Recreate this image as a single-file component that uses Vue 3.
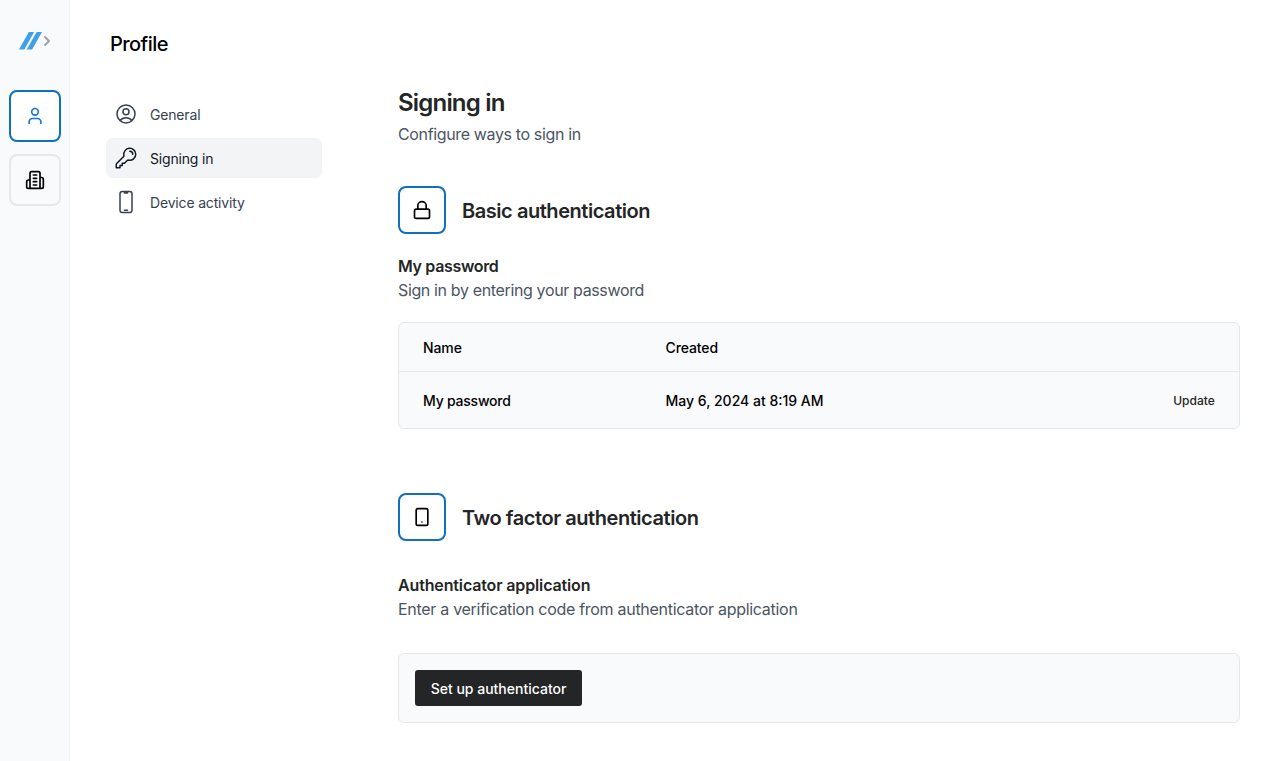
<script setup>
const menu = [
  { label: 'General', icon: 'M17.982 18.725A7.488 7.488 0 0012 15.75a7.488 7.488 0 00-5.982 2.975m11.963 0a9 9 0 10-11.963 0m11.963 0A8.966 8.966 0 0112 21a8.966 8.966 0 01-5.982-2.275M15 9.75a3 3 0 11-6 0 3 3 0 016 0z' },
  { label: 'Signing in', active: true, icon: 'M15.75 5.25a3 3 0 013 3m3 0a6 6 0 01-7.029 5.912c-.563-.097-1.159.026-1.563.43L10.5 17.25H8.25v2.25H6v2.25H2.25v-2.818c0-.597.237-1.17.659-1.591l6.499-6.499c.404-.404.527-1 .43-1.563A6 6 0 1121.75 8.25z' },
  { label: 'Device activity', icon: 'M10.5 1.5H8.25A2.25 2.25 0 006 3.75v16.5a2.25 2.25 0 002.25 2.25h7.5A2.25 2.25 0 0018 20.25V3.75a2.25 2.25 0 00-2.25-2.25H13.5m-3 0V3h3V1.5m-3 0h3m-3 18.75h3' },
]
</script>

<template>
  <div class="app">
    <aside class="rail">
      <div class="brand">
        <svg class="logo" width="24" height="18" viewBox="0 0 24 18">
          <path d="M9.8 0H15.1L5.4 17.6H0Z" />
          <path d="M17.6 0H23L13.1 17.6H7.7Z" />
        </svg>
        <svg class="chevron" width="8" height="16" viewBox="6 0 12 24"><path d="m9 18 6-6-6-6" /></svg>
      </div>
      <button class="tile selected" aria-label="Profile">
        <svg class="line" width="20" height="20" viewBox="0 0 24 24">
          <circle cx="12" cy="7" r="4" /><path d="M5 21v-2a4 4 0 0 1 4-4h6a4 4 0 0 1 4 4v2" />
        </svg>
      </button>
      <button class="tile" aria-label="Organization">
        <svg class="line" width="20" height="20" viewBox="0 0 24 24">
          <path d="M6 22V4a2 2 0 0 1 2-2h8a2 2 0 0 1 2 2v18ZM6 12H4a2 2 0 0 0-2 2v6a2 2 0 0 0 2 2h2M18 9h2a2 2 0 0 1 2 2v9a2 2 0 0 1-2 2h-2M10 6h4M10 10h4M10 14h4M10 18h4" />
        </svg>
      </button>
    </aside>

    <nav class="sidebar">
      <h1>Profile</h1>
      <a v-for="m in menu" :key="m.label" class="item" :class="{ active: m.active }">
        <svg class="thin" width="24" height="24" viewBox="0 0 24 24"><path :d="m.icon" /></svg>
        <span>{{ m.label }}</span>
      </a>
    </nav>

    <main class="content">
      <h2>Signing in</h2>
      <p class="muted lead">Configure ways to sign in</p>

      <section class="basic">
        <header class="head">
          <span class="badge">
            <svg class="line" width="20" height="20" viewBox="0 0 24 24">
              <rect x="3" y="11" width="18" height="11" rx="2" /><path d="M7 11V7a5 5 0 0 1 10 0v4" />
            </svg>
          </span>
          <h3>Basic authentication</h3>
        </header>
        <h4>My password</h4>
        <p class="muted">Sign in by entering your password</p>
        <div class="table">
          <div class="row header"><span>Name</span><span>Created</span></div>
          <div class="row">
            <span class="name">My password</span><span>May 6, 2024 at 8:19 AM</span>
            <button class="update">Update</button>
          </div>
        </div>
      </section>

      <section class="two">
        <header class="head">
          <span class="badge">
            <svg class="line" width="20" height="20" viewBox="0 0 24 24">
              <rect x="5" y="2" width="14" height="20" rx="2" /><path d="M12 18h.01" />
            </svg>
          </span>
          <h3>Two factor authentication</h3>
        </header>
        <h4>Authenticator application</h4>
        <p class="muted">Enter a verification code from authenticator application</p>
        <div class="panel"><button class="primary">Set up authenticator</button></div>
      </section>
    </main>
  </div>
</template>

<style>
body { margin: 0; background: #fff; }
</style>

<style scoped>
* { box-sizing: border-box; }
h1, h2, h3, h4, p { margin: 0; }
button { font: inherit; padding: 0; border: 0; cursor: pointer; color: inherit; }
svg { display: block; flex: none; }
.app { display: flex; height: 761px; overflow: hidden; font-family: Inter, "Liberation Sans", sans-serif; font-size: 16px; line-height: 24px; color: #000; }
.line { fill: none; stroke: currentColor; stroke-width: 2; stroke-linecap: round; stroke-linejoin: round; }
.thin { fill: none; stroke: currentColor; stroke-width: 1.5; stroke-linecap: round; stroke-linejoin: round; }

.rail { width: 70px; flex: none; background: #f9fafc; border-right: 1px solid #f3f4f6; display: flex; flex-direction: column; padding: 32px 0 0 9px; }
.brand { display: flex; height: 18px; margin: 0 0 40px 10px; align-items: center; }
.logo { fill: #3fa1e5; }
.chevron { fill: none; stroke: #9ca3af; stroke-width: 3; stroke-linecap: round; stroke-linejoin: round; }
.tile { width: 52px; height: 52px; margin-bottom: 12px; border: 2px solid #e5e7eb; border-radius: 8px; background: #f9fafc; display: grid; place-items: center; }
.tile.selected { border-color: #106fc0; background: #fff; color: #1976d2; }

.sidebar { width: 252px; flex: none; padding: 30px 0 0 36px; display: flex; flex-direction: column; gap: 4px; }
h1 { font-size: 20px; line-height: 28px; font-weight: 500; margin: 0 0 32px 4px; letter-spacing: -.55px; }
.item { height: 40px; padding: 0 8px; display: flex; align-items: center; gap: 12px; border-radius: 6px; font-size: 14px; line-height: 20px; letter-spacing: -.17px; color: #374151; }
.item span { padding-top: 2px; }
.item.active { background: #f3f4f6; color: #111827; }

.content { flex: 1; padding: 87px 36px 0 76px; }
h2 { font-size: 24px; line-height: 32px; font-weight: 600; color: #242526; letter-spacing: -.8px; }
h3 { font-size: 20px; line-height: 28px; font-weight: 600; color: #242526; letter-spacing: -.45px; }
h4 { font-size: 16px; line-height: 24px; font-weight: 600; color: #242526; letter-spacing: -.33px; }
.muted { color: #4b5563; letter-spacing: -.36px; }
.lead { margin-top: 3px; }
.head { display: flex; align-items: center; gap: 16px; }
.head h3 { padding-top: 2px; }
.badge { width: 48px; height: 48px; border: 2px solid #106fc0; border-radius: 8px; background: #fff; display: grid; place-items: center; }
.basic { margin-top: 40px; }
.basic h4 { margin-top: 20px; }
.table { margin-top: 20px; height: 107px; border: 1px solid #e5e7eb; border-radius: 6px; background: #f9fafc; font-size: 14px; font-weight: 500; line-height: 20px; }
.row { display: grid; grid-template-columns: 242.5px 1fr auto; align-items: center; height: 56px; padding: 1px 12px 0 24px; }
.row.header { height: 49px; padding-top: 2px; border-bottom: 1px solid #e5e7eb; letter-spacing: -.1px; }
.name { letter-spacing: -.22px; }
.update { width: 66px; height: 24px; border-radius: 3px; background: #fafafa; color: #242526; font-size: 12px; font-weight: 500; }
.two { margin-top: 64px; }
.two h4 { margin-top: 32px; letter-spacing: -.14px; }
.two .muted { letter-spacing: -.29px; }
.panel { margin-top: 32px; height: 70px; padding: 16px; border: 1px solid #e5e7eb; border-radius: 6px; background: #f9fafc; }
.primary { width: 167px; height: 36px; padding-top: 2px; display: grid; place-items: center; border-radius: 3px; background: #242526; color: #fff; font-size: 14px; font-weight: 500; line-height: 20px; }
</style>
